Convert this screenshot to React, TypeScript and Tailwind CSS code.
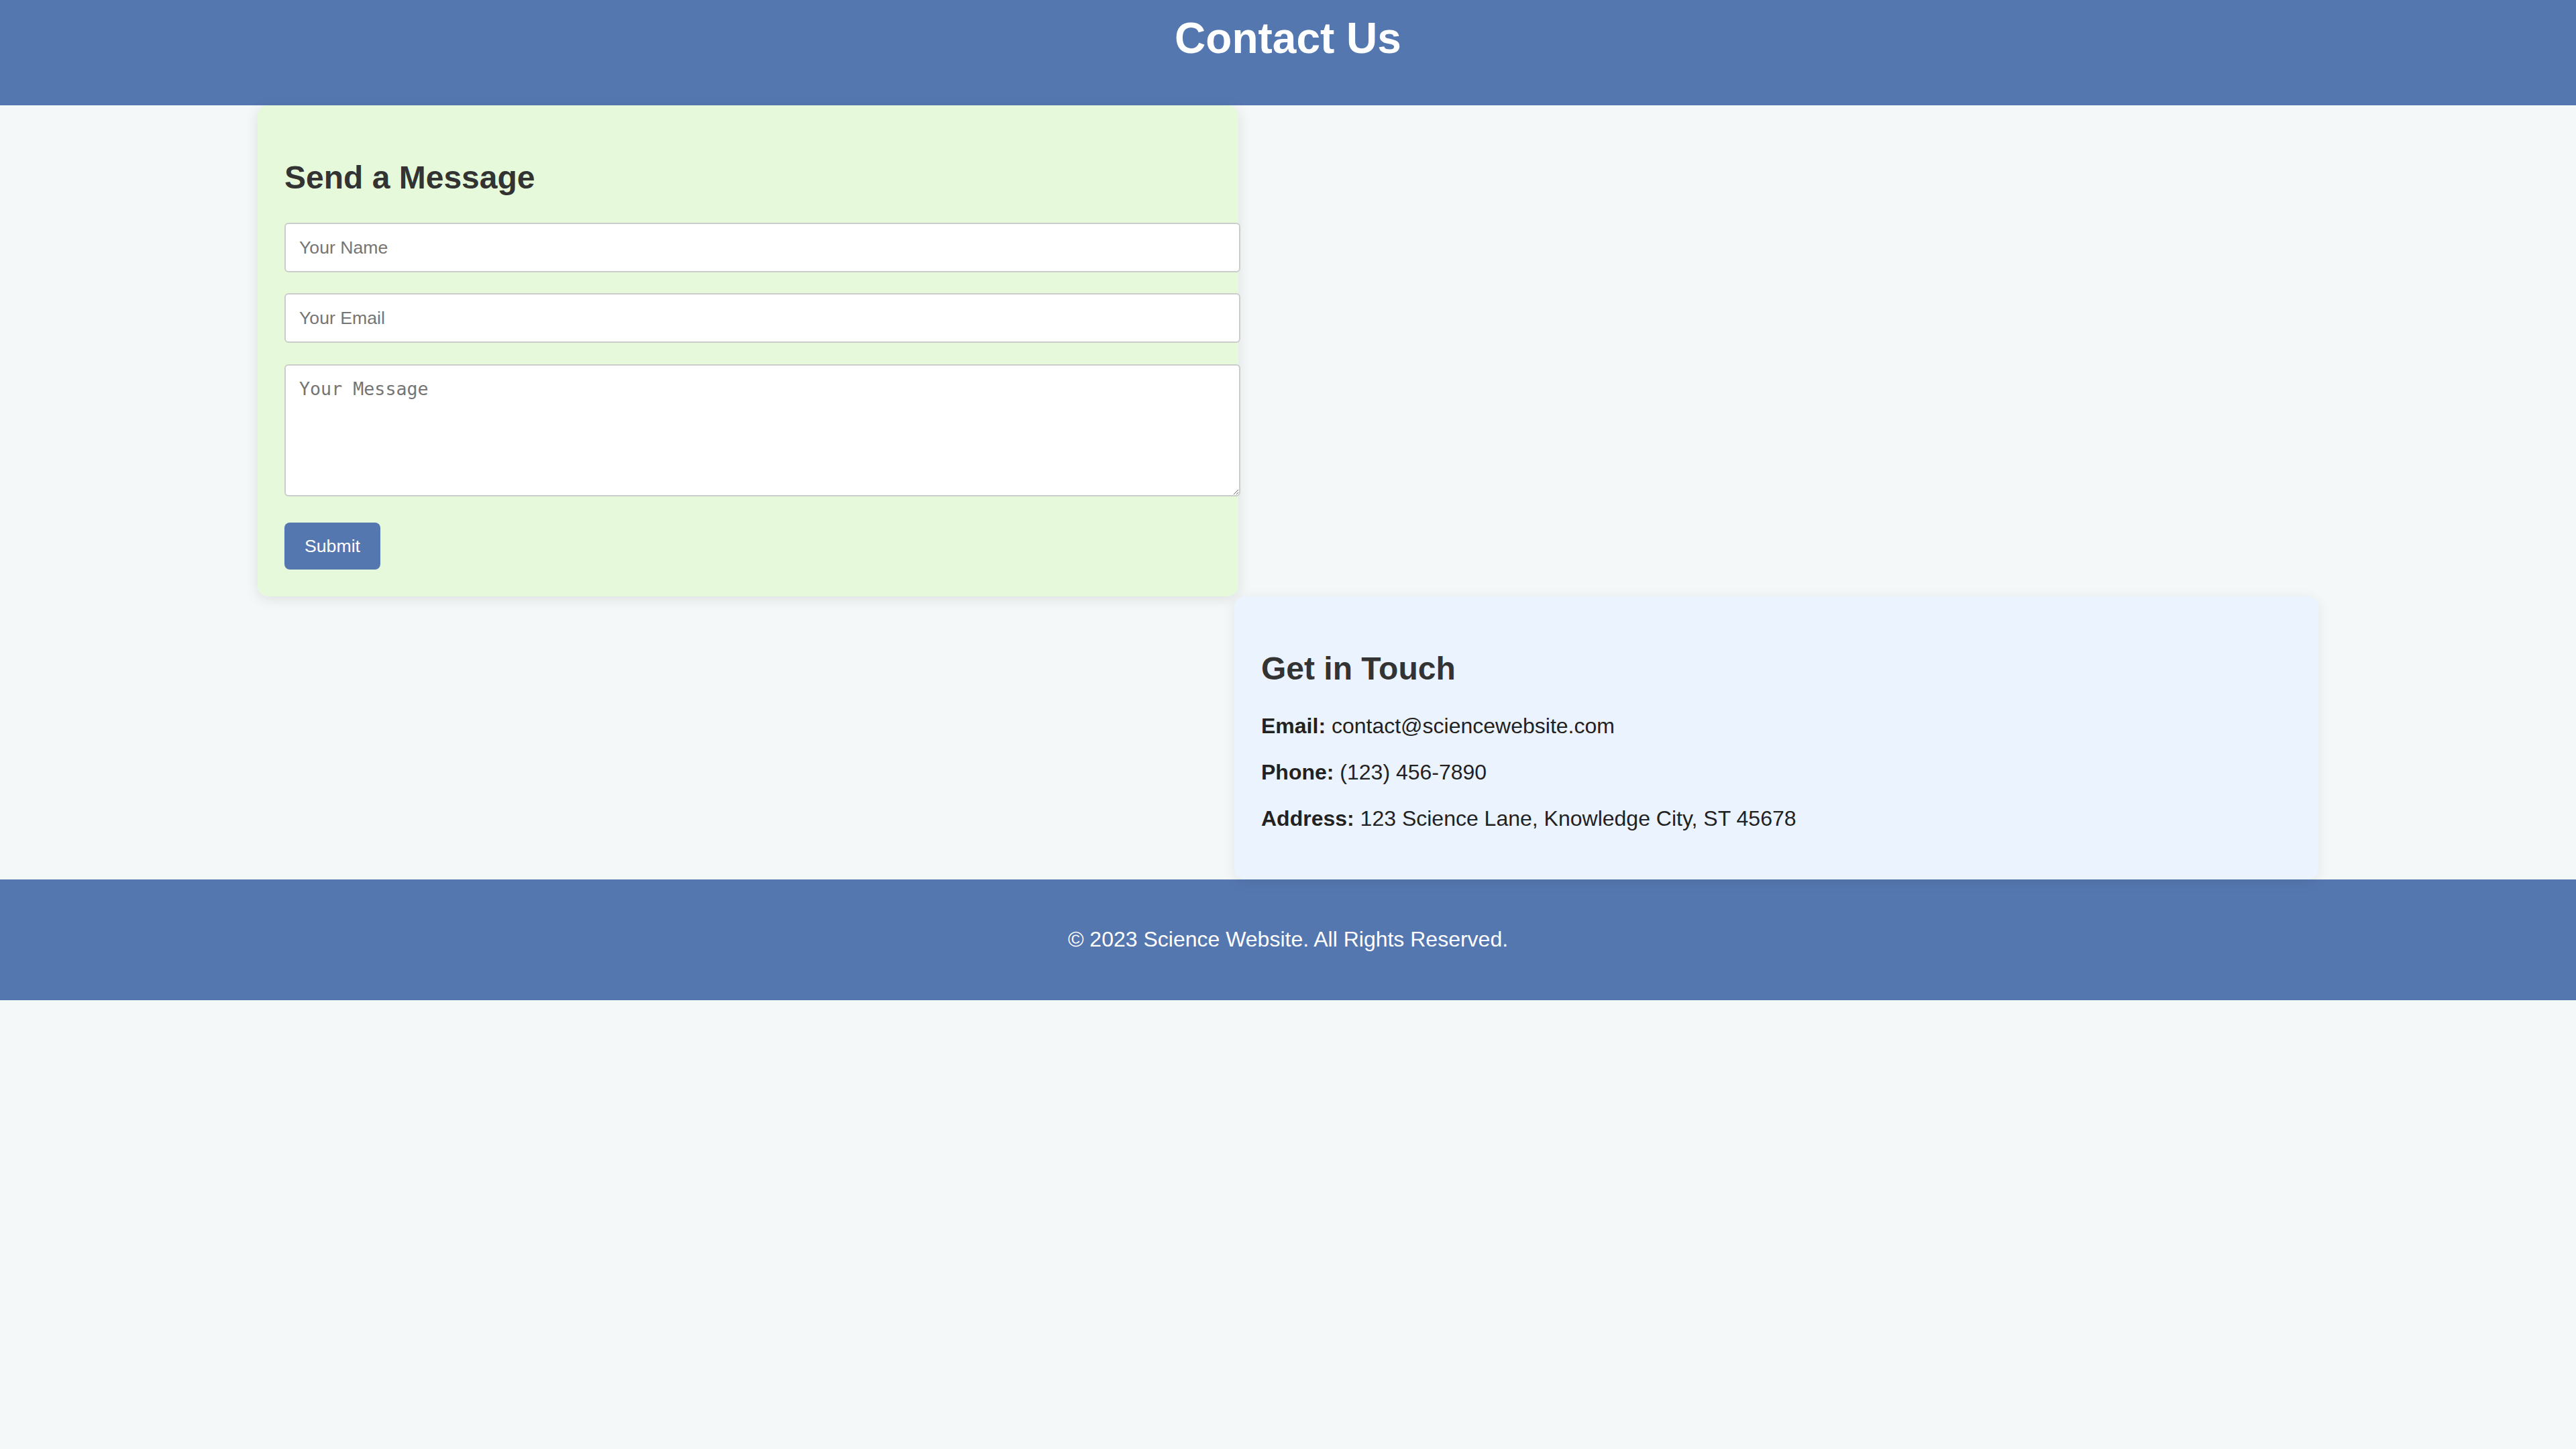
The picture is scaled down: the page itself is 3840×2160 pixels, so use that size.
export default function App() {
    return (
        <div className="min-h-screen bg-[#f4f8f9] font-['Liberation_Sans',Arial,sans-serif] text-[#333]">
            <header className="h-[157px] bg-[#5577b0] pt-[21px] text-center text-white">
                <h1 className="text-[64px] font-bold leading-[1.15]">Contact Us</h1>
            </header>

            <main className="mx-[384px] flex flex-col">
                <section className="w-[1462px] self-start rounded-[16px] bg-[#e6fadb] p-[40px] shadow-[0_4px_20px_rgba(0,0,0,0.1)]">
                    <h2 className="mt-[40px] mb-[40px] text-[48px] font-bold leading-[1.15]">Send a Message</h2>
                    <form className="flex flex-col items-start" onSubmit={(e) => e.preventDefault()}>
                        <input
                            type="text"
                            placeholder="Your Name"
                            className="mb-[31px] box-border h-[74px] w-[1425px] shrink-0 rounded-[6px] border-2 border-[#ccc] bg-white px-[20px] text-[26.67px] placeholder:text-[#757575]"
                        />
                        <input
                            type="email"
                            placeholder="Your Email"
                            className="mb-[32px] box-border h-[74px] w-[1425px] shrink-0 rounded-[6px] border-2 border-[#ccc] bg-white px-[20px] text-[26.67px] placeholder:text-[#757575]"
                        />
                        <textarea
                            placeholder="Your Message"
                            className="mb-[39px] box-border h-[197px] w-[1425px] shrink-0 rounded-[6px] border-2 border-[#ccc] bg-white px-[20px] py-[20px] font-['DejaVu_Sans_Mono',monospace] text-[26.67px] leading-[1.15] placeholder:text-[#757575]"
                        />
                        <button
                            type="submit"
                            className="h-[70px] rounded-[8px] bg-[#5577b0] px-[30px] text-[26.67px] text-white"
                        >
                            Submit
                        </button>
                    </form>
                </section>

                <section className="w-[1616px] self-end rounded-[16px] bg-[#ebf3fe] p-[40px] shadow-[0_4px_20px_rgba(0,0,0,0.08)]">
                    <h2 className="mt-[40px] mb-[40px] text-[48px] font-bold leading-[1.15]">Get in Touch</h2>
                    <div className="flex flex-col gap-[32px] pb-[32px] text-[32px] leading-[1.15] text-[#222]">
                        <p>
                            <strong>Email:</strong> contact@sciencewebsite.com
                        </p>
                        <p>
                            <strong>Phone:</strong> (123) 456-7890
                        </p>
                        <p>
                            <strong>Address:</strong> 123 Science Lane, Knowledge City, ST 45678
                        </p>
                    </div>
                </section>
            </main>

            <footer className="flex h-[180px] items-center justify-center bg-[#5577b0] text-[32px] leading-[1.15] text-white">
                <p>© 2023 Science Website. All Rights Reserved.</p>
            </footer>
        </div>
    );
}
